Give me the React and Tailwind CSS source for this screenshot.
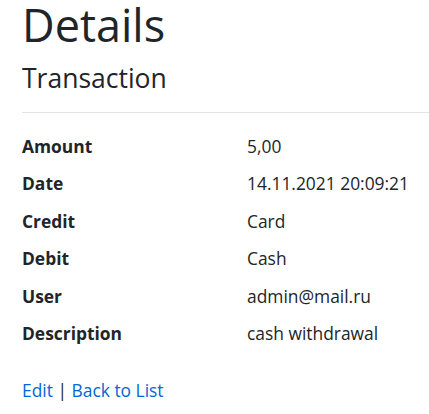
const rows = [
  ["Amount", "5,00"],
  ["Date", "14.11.2021 20:09:21"],
  ["Credit", "Card"],
  ["Debit", "Cash"],
  ["User", "admin@mail.ru"],
  ["Description", "cash withdrawal"],
];

const App = () => {
  return (
    <div
      className="min-h-screen bg-white pl-[22px] text-[#212529]"
      style={{ fontFamily: '"Open Sans", "Noto Sans", sans-serif' }}
    >
      <h1 className="text-[45px] leading-[50px] font-medium">Details</h1>
      <div>
        <h4 className="mt-[12px] text-[26.5px] leading-[32px] font-medium">
          Transaction
        </h4>
        <hr className="mt-[18px] border-t border-[#e3e3e3]" />
        <dl className="mt-[20px] grid grid-cols-[225px_1fr] text-[17.4px]">
          {rows.map(([label, value]) => (
            <div key={label} className="contents">
              <dt className="h-[37.4px] leading-[26px] font-bold">{label}</dt>
              <dd className="h-[37.4px] leading-[26px]">{value}</dd>
            </div>
          ))}
        </dl>
      </div>
      <div className="mt-[20px] text-[17.4px] leading-[26px]">
        <a href="#" className="text-[#0366d6]">
          Edit
        </a>{" "}
        |{" "}
        <a href="#" className="text-[#0366d6]">
          Back to List
        </a>
      </div>
    </div>
  );
};

export default App;
